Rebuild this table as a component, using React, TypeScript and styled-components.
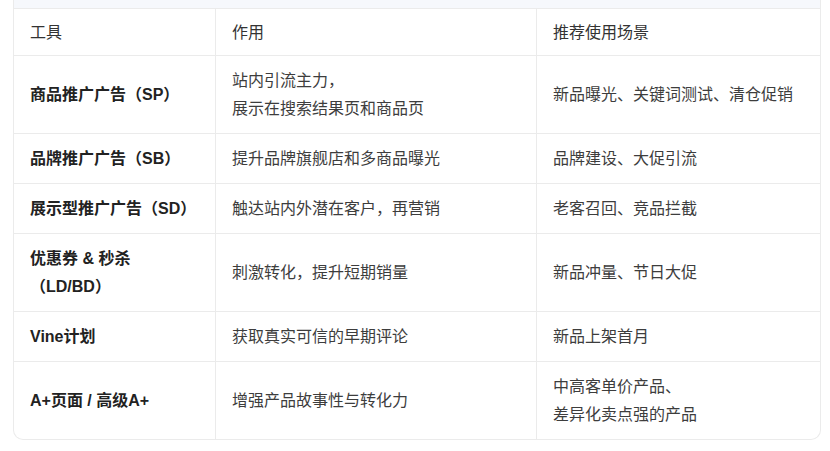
import React from "react";
import styled, { createGlobalStyle } from "styled-components";

const GlobalStyle = createGlobalStyle`
  html, body {
    margin: 0;
    padding: 0;
    background: #ffffff;
  }
  body {
    font-family: "Liberation Sans", "Noto Sans CJK SC", sans-serif;
    -webkit-font-smoothing: antialiased;
  }
`;

type Row = {
  tool: React.ReactNode;
  use: React.ReactNode;
  scene: React.ReactNode;
};

const rows: Row[] = [
  {
    tool: "商品推广广告（SP）",
    use: (
      <>
        站内引流主力，
        <br />
        展示在搜索结果页和商品页
      </>
    ),
    scene: "新品曝光、关键词测试、清仓促销",
  },
  {
    tool: "品牌推广广告（SB）",
    use: "提升品牌旗舰店和多商品曝光",
    scene: "品牌建设、大促引流",
  },
  {
    tool: "展示型推广广告（SD）",
    use: "触达站内外潜在客户，再营销",
    scene: "老客召回、竞品拦截",
  },
  {
    tool: (
      <>
        优惠券 &amp; 秒杀
        <br />
        （LD/BD）
      </>
    ),
    use: "刺激转化，提升短期销量",
    scene: "新品冲量、节日大促",
  },
  {
    tool: "Vine计划",
    use: "获取真实可信的早期评论",
    scene: "新品上架首月",
  },
  {
    tool: "A+页面 / 高级A+",
    use: "增强产品故事性与转化力",
    scene: (
      <>
        中高客单价产品、
        <br />
        差异化卖点强的产品
      </>
    ),
  },
];

export default function App() {
  return (
    <>
      <GlobalStyle />
      <Page>
        <TableWrap>
          <Band />
          <Grid>
            <HeadCell>工具</HeadCell>
            <HeadCell>作用</HeadCell>
            <HeadCell $last>推荐使用场景</HeadCell>
            {rows.map((r, i) => {
              const bottom = i === rows.length - 1;
              return (
                <React.Fragment key={i}>
                  <Cell $bold $bottom={bottom}>
                    <span>{r.tool}</span>
                  </Cell>
                  <Cell $bottom={bottom}>
                    <span>{r.use}</span>
                  </Cell>
                  <Cell $last $bottom={bottom}>
                    <span>{r.scene}</span>
                  </Cell>
                </React.Fragment>
              );
            })}
          </Grid>
        </TableWrap>
      </Page>
    </>
  );
}

const Page = styled.div`
  width: 830px;
  padding: 0 9px 0 13px;
  box-sizing: border-box;
`;

const TableWrap = styled.div`
  width: 808px;
  box-sizing: border-box;
  border: 1px solid #ebebeb;
  border-top: none;
  border-radius: 0 0 10px 10px;
  overflow: hidden;
  background: #ffffff;
`;

const Band = styled.div`
  height: 8px;
  background: #f6f8fc;
  border-bottom: 1px solid #ebebeb;
`;

const Grid = styled.div`
  display: grid;
  grid-template-columns: 202px 321px 1fr;
`;

const BaseCell = styled.div<{ $last?: boolean; $bottom?: boolean }>`
  display: flex;
  flex-direction: column;
  justify-content: center;
  padding: 0 16px;
  border-right: ${(p) => (p.$last ? "none" : "1px solid #ebebeb")};
  border-bottom: ${(p) => (p.$bottom ? "none" : "1px solid #ebebeb")};
  font-size: 16px;
  line-height: 28px;
`;

const HeadCell = styled(BaseCell)`
  padding-top: 10px;
  padding-bottom: 8px;
  color: #333333;
  font-weight: 400;
`;

const Cell = styled(BaseCell)<{ $bold?: boolean }>`
  padding-top: 10.5px;
  padding-bottom: 10.5px;
  color: ${(p) => (p.$bold ? "#222222" : "#3d3d3d")};
  font-weight: ${(p) => (p.$bold ? 700 : 400)};
`;
